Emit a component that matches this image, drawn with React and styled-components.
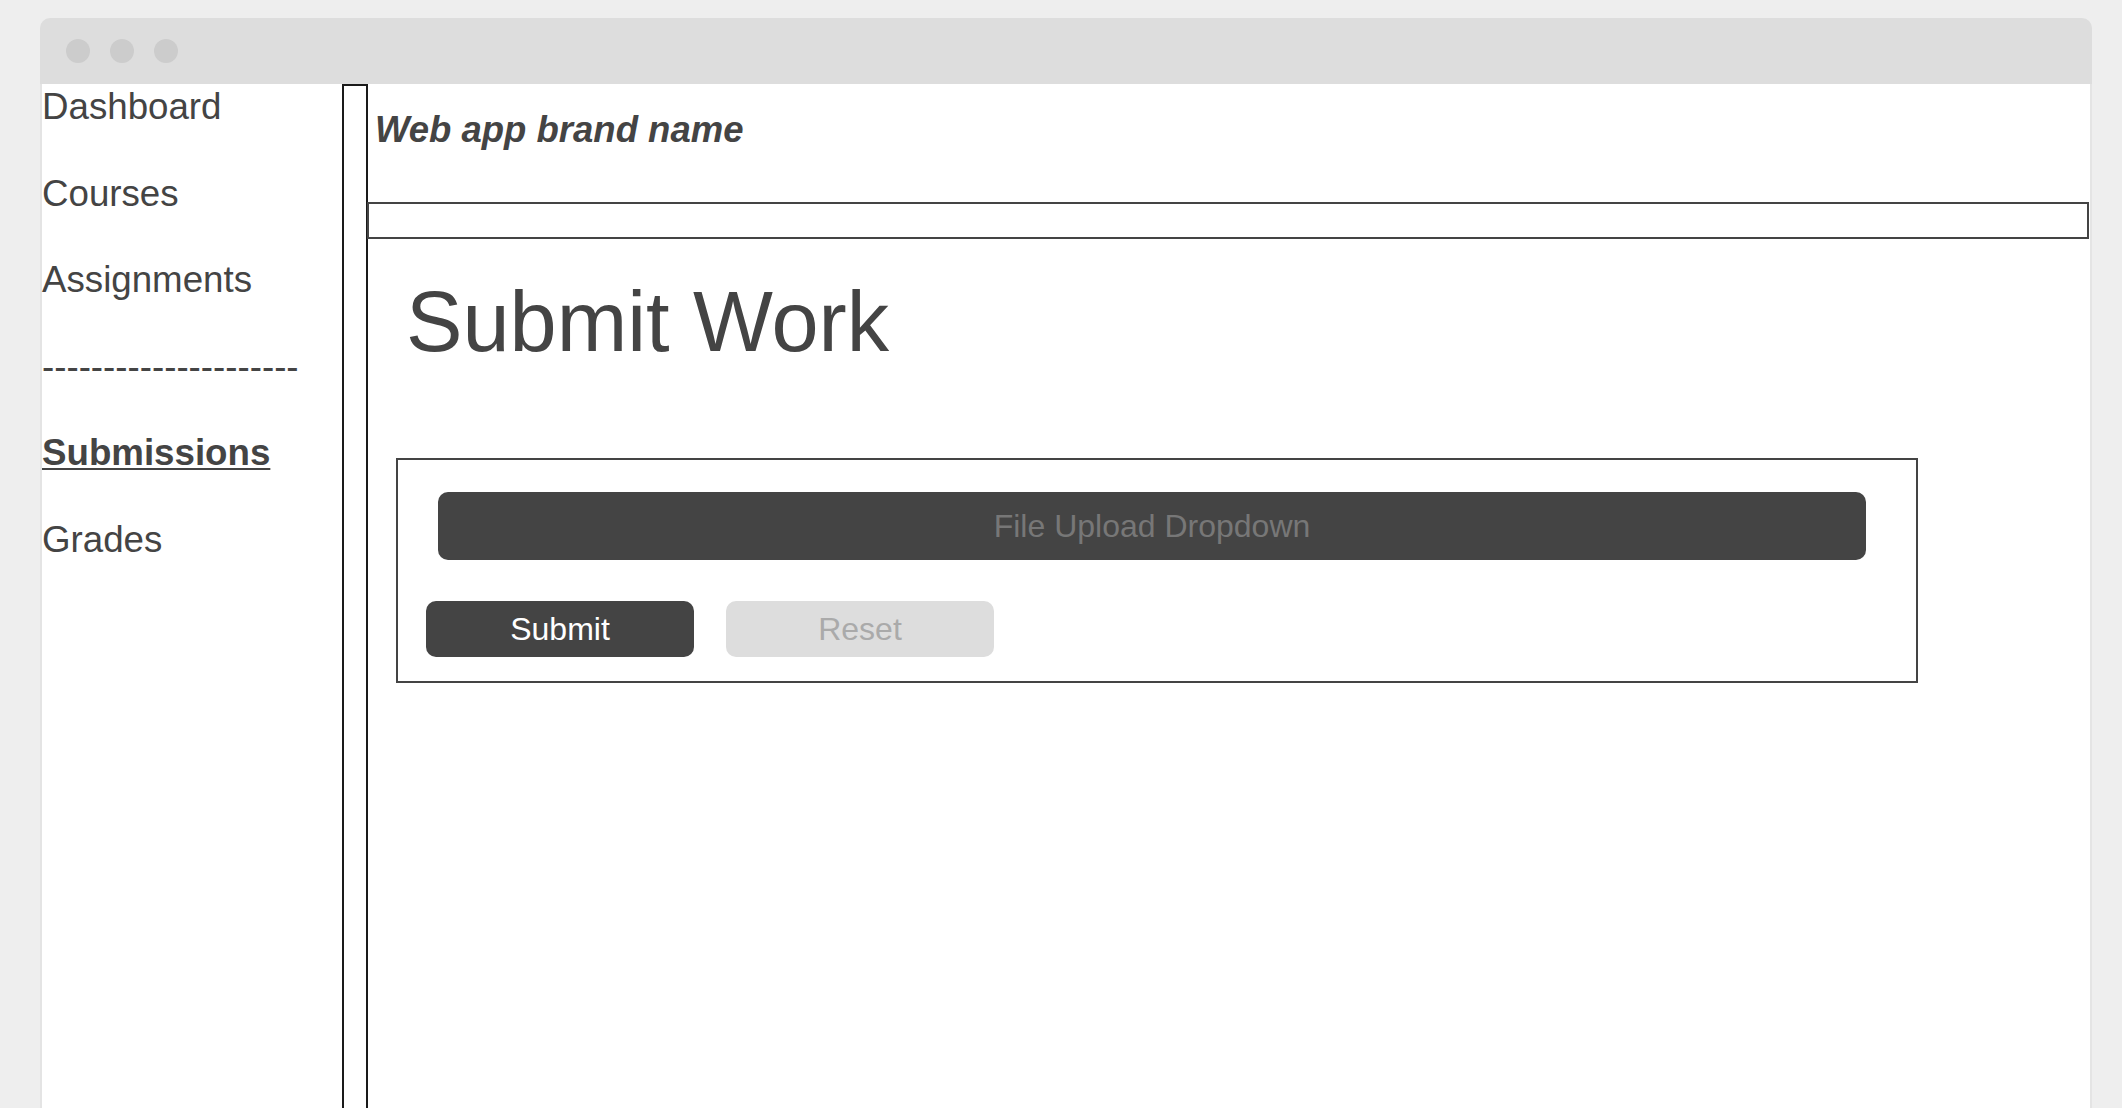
import React from 'react';
import styled, { createGlobalStyle } from 'styled-components';

const GlobalStyle = createGlobalStyle`
  html, body {
    margin: 0;
    padding: 0;
    background: #eeeeee;
    overflow: hidden;
    font-family: "Liberation Sans", Arial, sans-serif;
    color: #444444;
  }
`;

const navItems = [
  { label: 'Dashboard' },
  { label: 'Courses' },
  { label: 'Assignments' },
  { label: '---------------------' },
  { label: 'Submissions', active: true },
  { label: 'Grades' },
];

const App = () => {
  return (
    <>
      <GlobalStyle />
      <Page>
        <Window>
          <TitleBar>
            <Dot />
            <Dot />
            <Dot />
          </TitleBar>
          <WindowBody>
            <Sidebar>
              {navItems.map((item) => (
                <NavItem key={item.label} $active={item.active}>
                  {item.label}
                </NavItem>
              ))}
            </Sidebar>
            <Divider />
            <Main>
              <Brand>Web app brand name</Brand>
              <HeaderBar />
              <Content>
                <Title>Submit Work</Title>
                <FormBox>
                  <Dropdown>File Upload Dropdown</Dropdown>
                  <ButtonRow>
                    <Button $variant="primary">Submit</Button>
                    <Button $variant="secondary">Reset</Button>
                  </ButtonRow>
                </FormBox>
              </Content>
            </Main>
          </WindowBody>
        </Window>
      </Page>
    </>
  );
};

const Page = styled.div`
  padding: 18px 30px 0 40px;
`;

const Window = styled.div`
  display: flex;
  flex-direction: column;
  height: 1140px;
`;

const TitleBar = styled.div`
  height: 66px;
  flex-shrink: 0;
  background: #dddddd;
  border-radius: 10px 10px 0 0;
  display: flex;
  align-items: center;
  gap: 20px;
  padding-left: 26px;
`;

const Dot = styled.span`
  width: 24px;
  height: 24px;
  border-radius: 50%;
  background: #cccccc;
`;

const WindowBody = styled.div`
  flex: 1;
  display: flex;
  background: #ffffff;
  box-shadow: inset 2px 0 0 #e4e4e4, inset -2px 0 0 #e4e4e4;
`;

const Sidebar = styled.nav`
  width: 302px;
  box-sizing: border-box;
  padding-left: 2px;
  flex-shrink: 0;
  display: flex;
  flex-direction: column;
  gap: 41.5px;
`;

const NavItem = styled.div`
  font-size: 36.7px;
  line-height: 45px;
  white-space: nowrap;
  font-weight: ${(p) => (p.$active ? 700 : 400)};
  text-decoration: ${(p) => (p.$active ? 'underline' : 'none')};
  text-underline-offset: 3px;
  text-decoration-thickness: 2px;
`;

const Divider = styled.div`
  width: 22px;
  flex-shrink: 0;
  border: 2px solid #1a1a1a;
  border-bottom: none;
`;

const Main = styled.main`
  flex: 1;
  display: flex;
  flex-direction: column;
  padding-right: 3px;
`;

const Brand = styled.div`
  height: 118px;
  box-sizing: border-box;
  padding: 23px 0 0 7px;
  font-size: 36.5px;
  line-height: 45px;
  font-weight: 700;
  font-style: italic;
`;

const HeaderBar = styled.div`
  height: 37px;
  box-sizing: border-box;
  border: 2px solid #444444;
  margin-left: -1px;
`;

const Content = styled.div`
  padding-left: 28px;
`;

const Title = styled.h1`
  margin: 41px 0 0 10px;
  font-size: 84.7px;
  line-height: 84px;
  font-weight: 400;
`;

const FormBox = styled.section`
  margin-top: 93.5px;
  width: 1522px;
  box-sizing: border-box;
  border: 2px solid #444444;
  padding: 32px 0 24px 28px;
`;

const Dropdown = styled.div`
  height: 68px;
  margin: 0 50px 0 12px;
  border-radius: 10px;
  background: #444444;
  color: #777777;
  font-size: 32px;
  line-height: 1;
  display: flex;
  align-items: center;
  justify-content: center;
`;

const ButtonRow = styled.div`
  margin-top: 41px;
  display: flex;
  gap: 32px;
`;

const Button = styled.button`
  width: 268px;
  height: 56px;
  border: none;
  border-radius: 10px;
  font-family: inherit;
  font-size: 32px;
  line-height: 1;
  padding: 0;
  background: ${(p) => (p.$variant === 'primary' ? '#444444' : '#dddddd')};
  color: ${(p) => (p.$variant === 'primary' ? '#ffffff' : '#aaaaaa')};
`;

export default App;
